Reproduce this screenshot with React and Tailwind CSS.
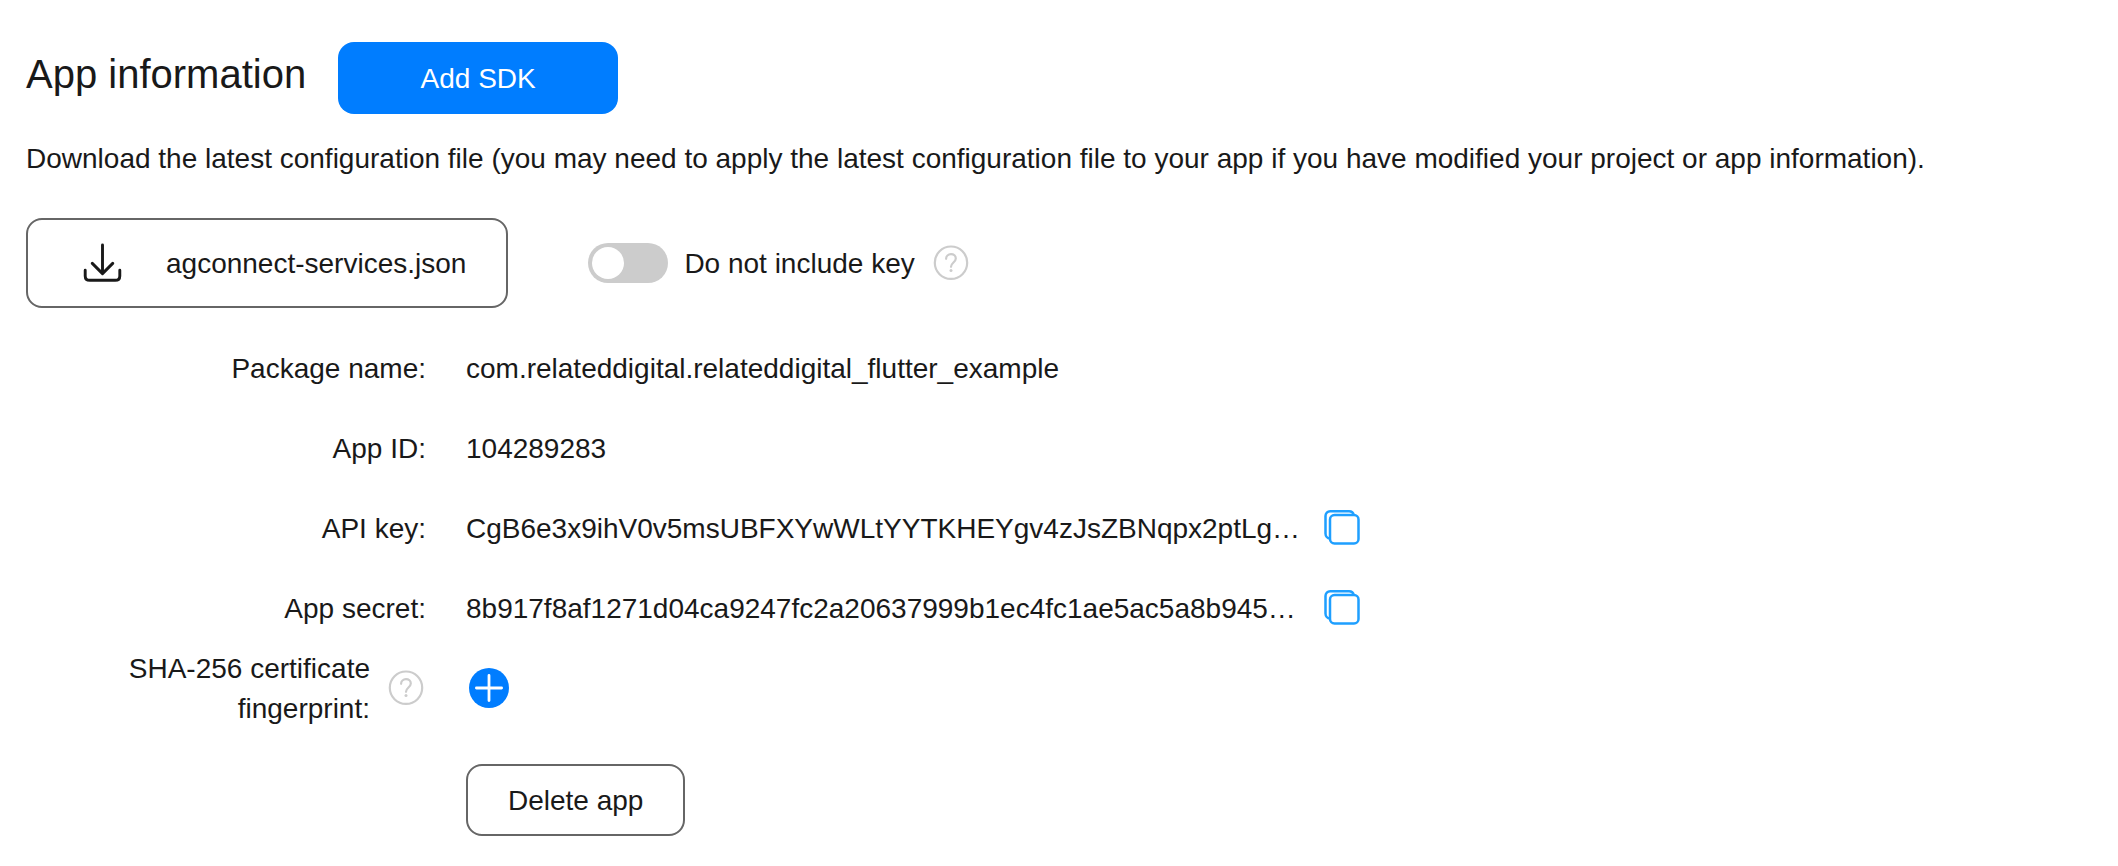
import { useState } from "react";

function HelpIcon() {
  return (
    <svg className="size-9 shrink-0" viewBox="0 0 36 36" fill="none" stroke="#cccccc" strokeWidth="2.2" strokeLinecap="round" aria-hidden="true">
      <circle cx="18" cy="17.7" r="16.2" />
      <path d="M13.100 13.800c0-2.800 2.100-4.600 4.900-4.600s4.800 1.800 4.800 4.300c0 3.800-4.800 4.200-4.800 8.300" />
      <circle cx="18" cy="25.400" r="1.500" fill="#cccccc" stroke="none" />
    </svg>
  );
}

function CopyIcon() {
  return (
    <svg className="size-9" viewBox="0 0 36 36" fill="none" stroke="#1e9fff" strokeWidth="2.5" aria-hidden="true">
      <rect x="6" y="5" width="28.500" height="28.500" rx="4.500" />
      <path d="M6 28.500C3.400 28.500 1.500 26 1.500 23.500V6c0-2.800 2-4.700 4.700-4.700h18.800c2.500 0 4.300 1.400 4.700 3.700" />
    </svg>
  );
}

function DownloadIcon() {
  return (
    <svg className="size-10 shrink-0" viewBox="0 0 40 40" fill="none" stroke="#191919" strokeWidth="2.900" strokeLinecap="round" strokeLinejoin="round" aria-hidden="true">
      <path d="M20.500 1.900V30.600M10.300 20.400l10.200 10.200 10.200-10.200" />
      <path d="M3.200 27.300v5.600c0 2.800 1.800 4.400 4.600 4.400h25.400c2.800 0 4.600-1.600 4.600-4.400v-5.600" />
    </svg>
  );
}

function PlusIcon() {
  return (
    <svg className="size-10" viewBox="0 0 40 40" fill="none" aria-hidden="true">
      <circle cx="20" cy="20" r="20" fill="#007dff" />
      <path d="M20 7.400v25.200M7.400 20h25.200" stroke="#fff" strokeWidth="2.800" strokeLinecap="round" />
    </svg>
  );
}

const fields = [
  { label: "Package name:", value: "com.relateddigital.relateddigital_flutter_example" },
  { label: "App ID:", value: "104289283" },
  { label: "API key:", value: "CgB6e3x9ihV0v5msUBFXYwWLtYYTKHEYgv4zJsZBNqpx2ptLg…", copy: true },
  { label: "App secret:", value: "8b917f8af1271d04ca9247fc2a20637999b1ec4fc1ae5ac5a8b945…", copy: true },
];

export default function App() {
  const [excludeKey, setExcludeKey] = useState(false);

  return (
    <main className="min-h-screen bg-white px-[26px] pt-[42px] pb-[30px] font-['Liberation_Sans',Arial,sans-serif] text-[28px] leading-10 text-[#191919]">
      <header className="flex items-start gap-8">
        <h1 className="text-[40px] leading-16">App information</h1>
        <button type="button" className="h-18 w-70 rounded-2xl bg-[#007dff] pt-0.5 text-white">
          Add SDK
        </button>
      </header>

      <p className="mt-[25px]">
        Download the latest configuration file (you may need to apply the latest configuration file to your app if you
        have modified your project or app information).
      </p>

      <section className="mt-[39px] flex items-center gap-20">
        <button type="button" className="flex h-[90px] items-center gap-11 rounded-2xl border-2 border-[#666666] pr-10 pl-[54px]">
          <DownloadIcon />
          <span className="pt-0.5">agconnect-services.json</span>
        </button>
        <div className="flex items-center gap-[18px]">
          <label className="flex items-center gap-4">
            <input
              type="checkbox"
              role="switch"
              checked={excludeKey}
              onChange={(e) => setExcludeKey(e.target.checked)}
              className="h-10 w-20 appearance-none rounded-full bg-[#cccccc] p-1 before:block before:size-8 before:rounded-full before:bg-white checked:bg-[#007dff] checked:before:ml-10"
            />
            <span className="pt-0.5">Do not include key</span>
          </label>
          <button type="button" aria-label="About excluding the key">
            <HelpIcon />
          </button>
        </div>
      </section>

      <dl className="mt-5">
        {fields.map((field) => (
          <div key={field.label} className="flex h-20 items-center gap-10">
            <dt className="w-100 shrink-0 pt-0.5 text-right">{field.label}</dt>
            <dd className="flex items-center">
              <span className={field.copy ? "w-[858px] pt-0.5" : "pt-0.5"}>{field.value}</span>
              {field.copy && (
                <button type="button" aria-label={"Copy " + field.label.replace(":", "")}>
                  <CopyIcon />
                </button>
              )}
            </dd>
          </div>
        ))}
        <div className="flex h-20 items-center gap-10">
          <dt className="flex w-100 shrink-0 items-center justify-end gap-[18px] pr-0.5">
            <span className="w-64 pt-0.5 text-right">SHA-256 certificate fingerprint:</span>
            <button type="button" aria-label="About the certificate fingerprint">
              <HelpIcon />
            </button>
          </dt>
          <dd className="flex items-center px-[3px]">
            <button type="button" aria-label="Add fingerprint">
              <PlusIcon />
            </button>
          </dd>
        </div>
      </dl>

      <div className="mt-9 pl-110">
        <button type="button" className="h-18 rounded-2xl border-2 border-[#666666] px-10 pt-0.5">
          Delete app
        </button>
      </div>
    </main>
  );
}
